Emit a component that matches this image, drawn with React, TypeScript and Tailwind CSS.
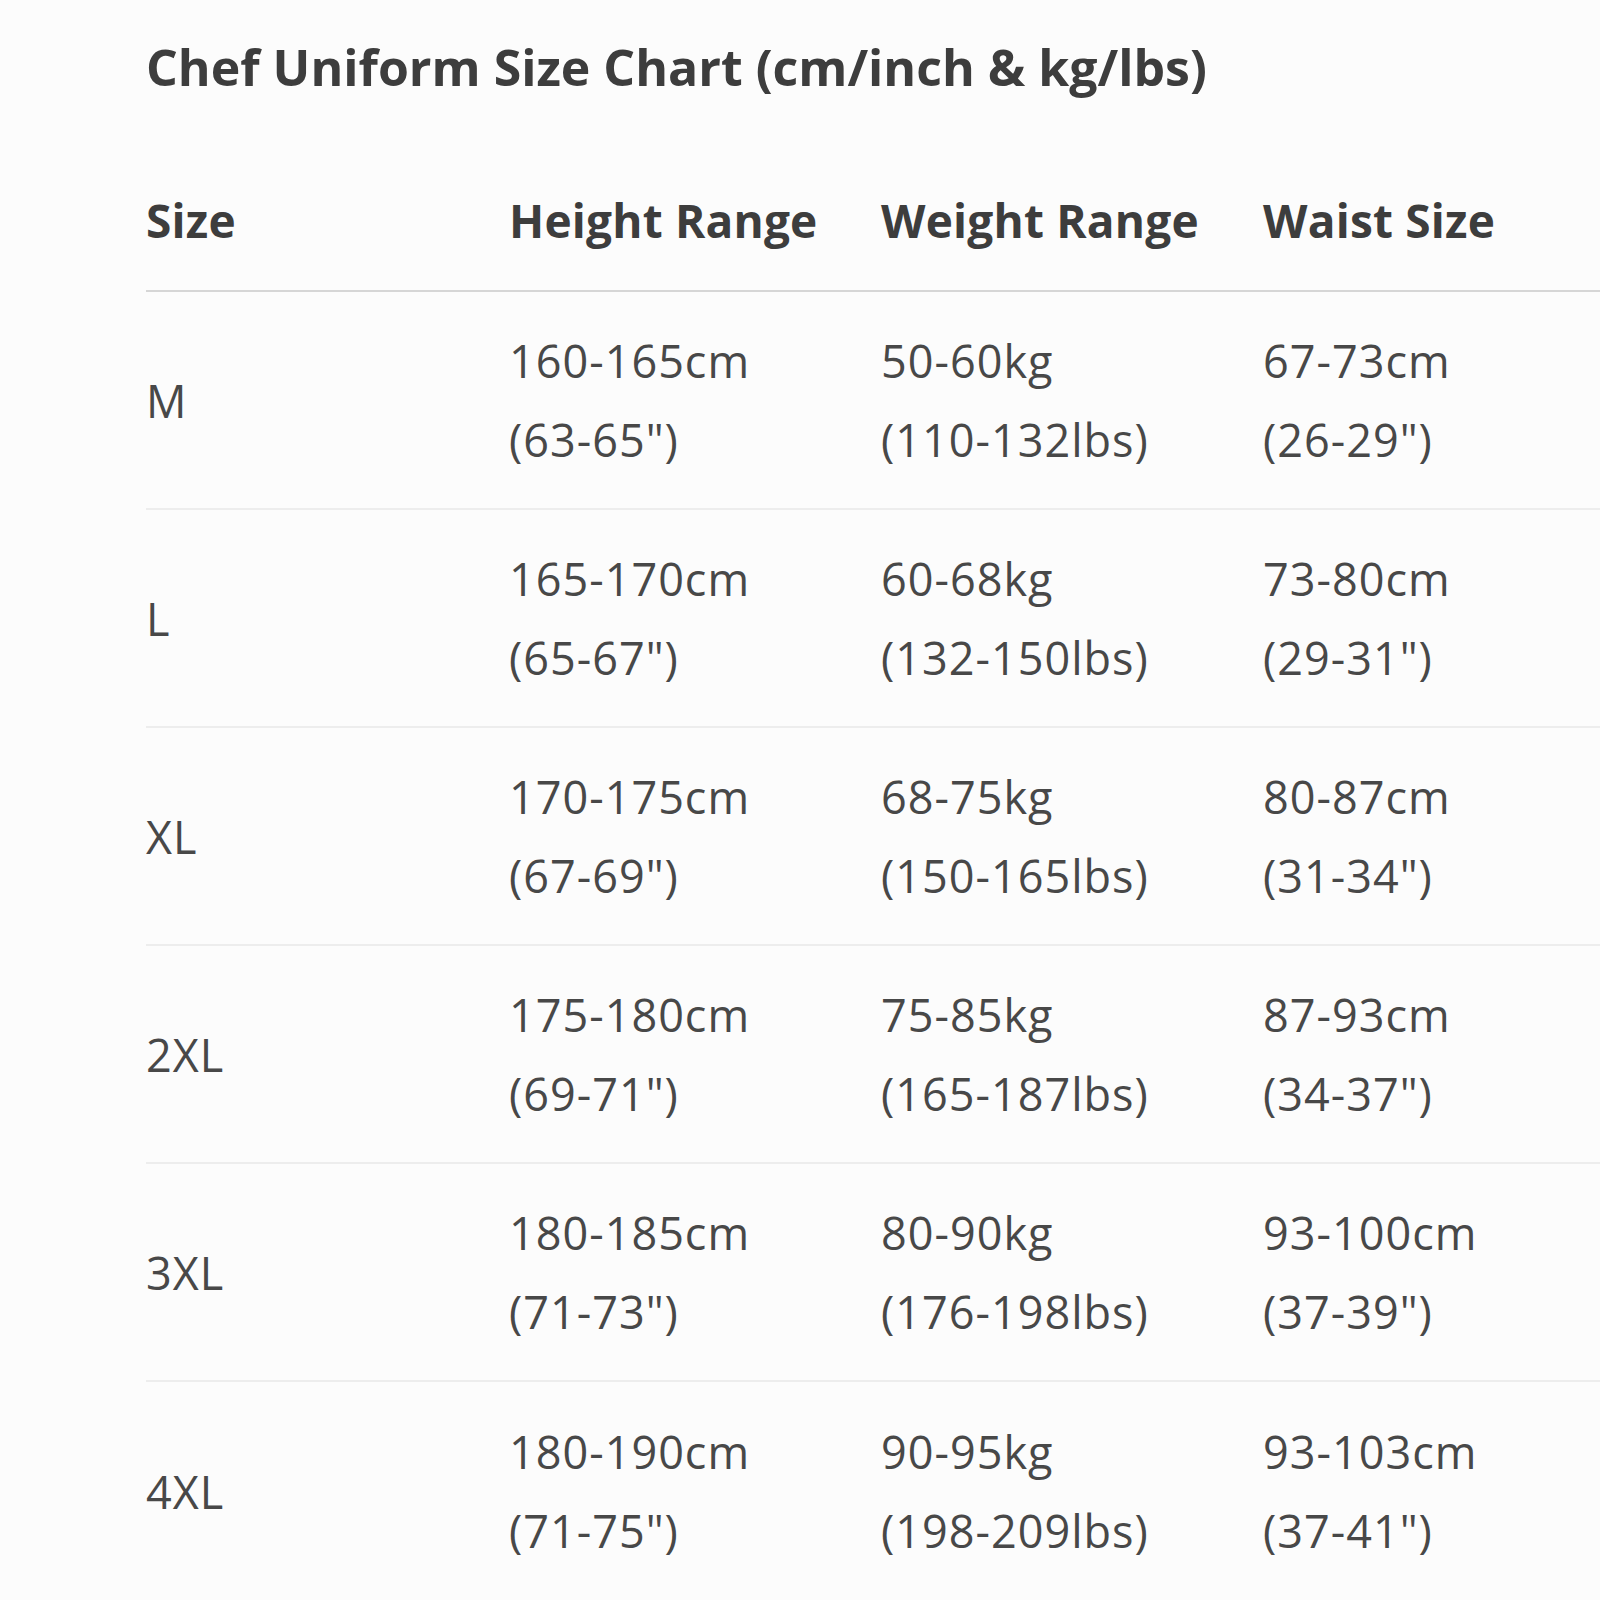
const rows = [
  { size: "M", height: ["160-165cm", '(63-65")'], weight: ["50-60kg", "(110-132lbs)"], waist: ["67-73cm", '(26-29")'] },
  { size: "L", height: ["165-170cm", '(65-67")'], weight: ["60-68kg", "(132-150lbs)"], waist: ["73-80cm", '(29-31")'] },
  { size: "XL", height: ["170-175cm", '(67-69")'], weight: ["68-75kg", "(150-165lbs)"], waist: ["80-87cm", '(31-34")'] },
  { size: "2XL", height: ["175-180cm", '(69-71")'], weight: ["75-85kg", "(165-187lbs)"], waist: ["87-93cm", '(34-37")'] },
  { size: "3XL", height: ["180-185cm", '(71-73")'], weight: ["80-90kg", "(176-198lbs)"], waist: ["93-100cm", '(37-39")'] },
  { size: "4XL", height: ["180-190cm", '(71-75")'], weight: ["90-95kg", "(198-209lbs)"], waist: ["93-103cm", '(37-41")'] },
];

const cols = "grid grid-cols-[363px_372px_382px_321px]";

function Cell({ lines }: { lines: string[] }) {
  return (
    <div className="flex flex-col justify-center leading-[79px]">
      {lines.map((l) => (
        <span key={l}>{l}</span>
      ))}
    </div>
  );
}

export default function App() {
  return (
    <div
      className="h-[1600px] w-[1600px] overflow-hidden bg-[#fcfcfc] pl-[146px] text-[#484848]"
      style={{ fontFamily: '"Open Sans", sans-serif' }}
    >
      {/* Title */}
      <div className="flex h-[134px] items-center text-[50px] font-bold leading-none text-[#3d3d3d]">
        Chef Uniform Size Chart (cm/inch &amp; kg/lbs)
      </div>

      {/* Header */}
      <div
        className={`${cols} h-[158px] items-center border-b-2 border-[#d6d6d6] pt-[15px] text-[46px] font-bold leading-none tracking-[0.2px] text-[#3d3d3d]`}
      >
        <div>Size</div>
        <div>Height Range</div>
        <div>Weight Range</div>
        <div>Waist Size</div>
      </div>

      {/* Rows */}
      {rows.map((r, i) => (
        <div
          key={r.size}
          className={`${cols} h-[218px] items-center ${i < rows.length - 1 ? "border-b-2 border-[#ededed]" : ""} text-[45px] tracking-[1px]`}
        >
          <div className="leading-none">{r.size}</div>
          <Cell lines={r.height} />
          <Cell lines={r.weight} />
          <Cell lines={r.waist} />
        </div>
      ))}
    </div>
  );
}
